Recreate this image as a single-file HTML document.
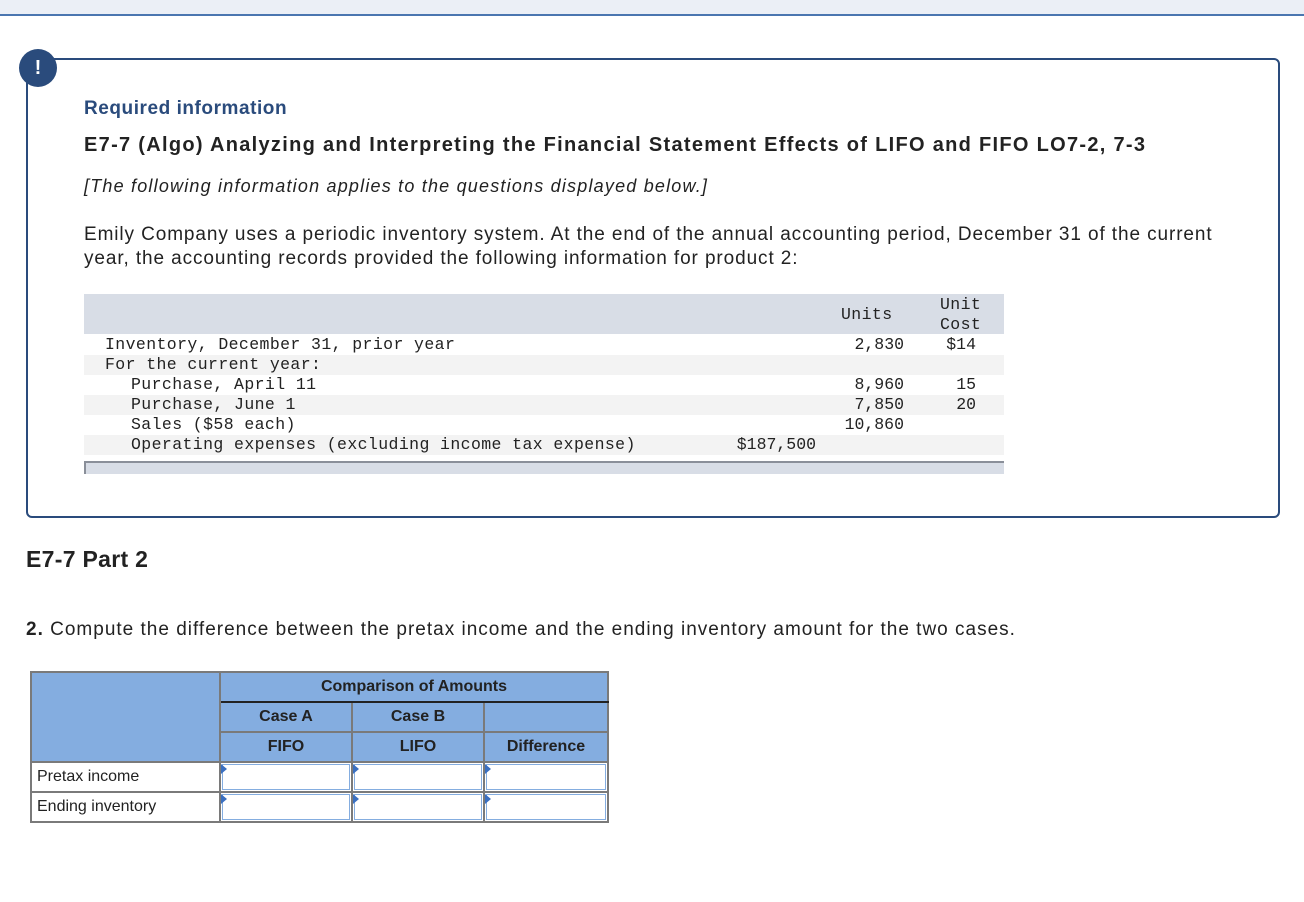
<!DOCTYPE html>
<html><head><meta charset="utf-8"><style>
*{margin:0;padding:0;box-sizing:border-box}
body{width:1304px;height:902px;background:#fff;position:relative;overflow:hidden;font-family:"Liberation Sans",Arial,sans-serif;color:#222}
.a{position:absolute;white-space:nowrap}
.m{font-family:"Liberation Mono",monospace;font-size:16.5px;line-height:20px;color:#222;letter-spacing:0.4px}
.r{text-align:right;letter-spacing:0px}
.ct{position:absolute;border-collapse:collapse;left:30px;top:671px;font-size:16px}
.ct td{border:2px solid #7a7a7a;height:30px;text-align:center;padding:0}
.bl{background:#84ade0;font-weight:bold;color:#222}
.in{background:#fff;position:relative}
.in div{position:absolute;left:1px;top:1px;right:1px;bottom:1px;border:1px solid #84ade0}
.in span{position:absolute;left:0;top:1px;width:0;height:0;border-top:5px solid transparent;border-bottom:5px solid transparent;border-left:6px solid #3a6fc0}
</style></head><body>
<div class="a" style="left:0;top:0;width:1304px;height:14px;background:#ebeff6"></div>
<div class="a" style="left:0;top:14px;width:1304px;height:2px;background:#4a76b0"></div>
<div class="a" style="left:26px;top:58px;width:1254px;height:460px;border:2px solid #2a4b7c;border-radius:6px"></div>
<div class="a" style="left:19px;top:49px;width:38px;height:38px;border-radius:50%;background:#2a4b7c;color:#fff;font-weight:bold;font-size:20px;text-align:center;line-height:38px">!</div>
<div class="a" style="left:84px;top:98px;font-size:19px;font-weight:bold;color:#2a4b7c;letter-spacing:0.55px">Required information</div>
<div class="a" style="left:84px;top:134px;font-size:20px;font-weight:bold;letter-spacing:1.3px">E7-7 (Algo) Analyzing and Interpreting the Financial Statement Effects of LIFO and FIFO LO7-2, 7-3</div>
<div class="a" style="left:84px;top:176px;font-size:18px;font-style:italic;letter-spacing:1.2px">[The following information applies to the questions displayed below.]</div>
<div class="a" style="left:84px;top:223px;font-size:19px;letter-spacing:0.9px;line-height:24px">Emily Company uses a periodic inventory system. At the end of the annual accounting period, December 31 of the current<br>year, the accounting records provided the following information for product 2:</div>

<div class="a" style="left:84px;top:294px;width:920px;height:40px;background:#d8dde6"></div>
<div class="a" style="left:84px;top:355px;width:920px;height:20px;background:#f3f3f3"></div>
<div class="a" style="left:84px;top:395px;width:920px;height:20px;background:#f3f3f3"></div>
<div class="a" style="left:84px;top:435px;width:920px;height:20px;background:#f3f3f3"></div>
<div class="a" style="left:84px;top:461px;width:920px;height:13px;background:#d8dde6;border-top:2px solid #8a8f99;border-left:2px solid #8a8f99"></div>
<div class="a m" style="left:841px;top:305px">Units</div>
<div class="a m" style="left:940px;top:295px">Unit</div>
<div class="a m" style="left:940px;top:315px">Cost</div>
<div class="a m" style="left:105px;top:335px">Inventory, December 31, prior year</div>
<div class="a m" style="left:105px;top:355px">For the current year:</div>
<div class="a m" style="left:131px;top:375px">Purchase, April 11</div>
<div class="a m" style="left:131px;top:395px">Purchase, June 1</div>
<div class="a m" style="left:131px;top:415px">Sales ($58 each)</div>
<div class="a m" style="left:131px;top:435px">Operating expenses (excluding income tax expense)</div>
<div class="a m r" style="left:800px;width:104px;top:335px">2,830</div>
<div class="a m r" style="left:800px;width:104px;top:375px">8,960</div>
<div class="a m r" style="left:800px;width:104px;top:395px">7,850</div>
<div class="a m r" style="left:800px;width:104px;top:415px">10,860</div>
<div class="a m r" style="left:900px;width:76px;top:335px">$14</div>
<div class="a m r" style="left:900px;width:76px;top:375px">15</div>
<div class="a m r" style="left:900px;width:76px;top:395px">20</div>
<div class="a m r" style="left:700px;width:116px;top:435px">$187,500</div>

<div class="a" style="left:26px;top:546px;font-size:23px;font-weight:bold;letter-spacing:0.3px">E7-7 Part 2</div>
<div class="a" style="left:26px;top:619px;font-size:19px;letter-spacing:1.0px"><b>2.</b> Compute the difference between the pretax income and the ending inventory amount for the two cases.</div>

<table class="ct">
<tr><td class="bl" rowspan="3" style="width:189px;height:90px"></td><td class="bl" colspan="3" style="border-bottom:2px solid #222">Comparison of Amounts</td></tr>
<tr><td class="bl" style="width:132px">Case A</td><td class="bl" style="width:132px">Case B</td><td class="bl" style="width:124px"></td></tr>
<tr><td class="bl">FIFO</td><td class="bl">LIFO</td><td class="bl">Difference</td></tr>
<tr><td style="text-align:left;padding-left:5px;background:#fff">Pretax income</td><td class="in"><div></div><span></span></td><td class="in"><div></div><span></span></td><td class="in"><div></div><span></span></td></tr>
<tr><td style="text-align:left;padding-left:5px;background:#fff">Ending inventory</td><td class="in"><div></div><span></span></td><td class="in"><div></div><span></span></td><td class="in"><div></div><span></span></td></tr>
</table>
</body></html>
